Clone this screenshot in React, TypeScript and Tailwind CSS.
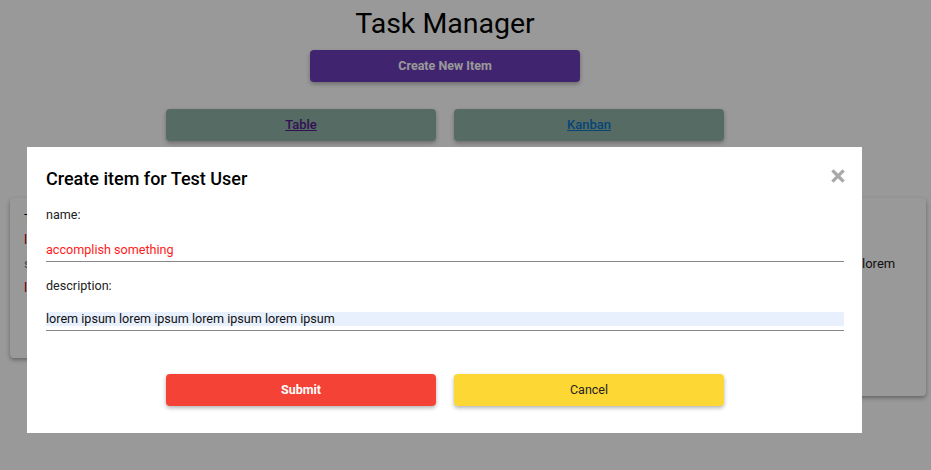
import React from 'react';

const font = { fontFamily: 'Roboto, "Noto Sans", sans-serif' };

function ItemCard({ title, lines, className }: { title: string; lines: { text: string; color: string }[]; className: string }) {
    return (
        <div className={`bg-white rounded-[4px] shadow-[0_2px_4px_rgba(0,0,0,0.35)] px-[14px] py-[12px] text-[13px] ${className}`}>
            <div className="text-black leading-[18px]">{title}</div>
            {lines.map((l, i) => (
                <div key={i} className="leading-[24px]" style={{ color: l.color }}>
                    {l.text}
                </div>
            ))}
        </div>
    );
}

export default function App() {
    return (
        <div className="relative w-[931px] h-[470px] overflow-hidden bg-white" style={font}>
            {/* Page behind the modal */}
            <div className="w-[890px] flex flex-col items-center">
                <h1 className="text-[28.5px] leading-[36px] mt-[6px] text-black">Task Manager</h1>
                <button className="mt-[8px] w-[270px] h-[32px] rounded-[4px] bg-[#6b3cb9] text-white text-[12.5px] font-bold shadow-[0_2px_4px_rgba(0,0,0,0.3)]">
                    Create New Item
                </button>
                <div className="mt-[27px] flex gap-[18px]">
                    <button className="w-[270px] h-[32px] rounded-[4px] bg-[#8fb2a7] text-[13px] font-medium shadow-[0_2px_4px_rgba(0,0,0,0.3)]">
                        <a href="#" className="underline text-[#551a8b]">Table</a>
                    </button>
                    <button className="w-[270px] h-[32px] rounded-[4px] bg-[#8fb2a7] text-[13px] font-medium shadow-[0_2px_4px_rgba(0,0,0,0.3)]">
                        <a href="#" className="underline text-[#0b73c5]">Kanban</a>
                    </button>
                </div>
            </div>
            <div className="mt-[57px] pl-[10px] pr-[5px] flex gap-[16px] items-start">
                <ItemCard
                    className="w-[290px] h-[160px]"
                    title="Test item"
                    lines={[
                        { text: 'lorem', color: '#c00000' },
                        { text: 'status', color: '#777' },
                        { text: 'lorem ipsum', color: '#c00000' },
                    ]}
                />
                <ItemCard
                    className="w-[290px] h-[160px]"
                    title="Test item"
                    lines={[{ text: 'lorem', color: '#c00000' }]}
                />
                <ItemCard
                    className="flex-1 h-[198px]"
                    title="Test item"
                    lines={[
                        { text: 'description', color: '#777' },
                        { text: 'lorem ipsum lorem ipsum lorem ipsum lorem ipsum lorem', color: '#222' },
                    ]}
                />
            </div>

            {/* Overlay */}
            <div className="absolute inset-0 bg-black/40" />

            {/* Modal */}
            <div className="absolute left-[27px] top-[147px] w-[835px] h-[286px] bg-white pt-[20px] px-[19px] pr-[18px]">
                <div className="flex items-center justify-between">
                    <h2 className="text-[18px] leading-[24px] font-medium text-black">Create item for Test User</h2>
                    <svg width="14" height="14" viewBox="0 0 14 14" className="mr-[-1px] mt-[-6px]">
                        <path d="M2.5 2.5 L11.5 11.5 M11.5 2.5 L2.5 11.5" stroke="#a9a9a9" strokeWidth="3.2" strokeLinecap="square" />
                    </svg>
                </div>
                <label className="block mt-[16px] text-[12.6px] leading-[16px] text-[#222]">name:</label>
                <input
                    readOnly
                    value="accomplish something"
                    className="block w-full mt-[14px] h-[25px] text-[12.6px] text-[#ff1a1a] border-b border-[#888] outline-none bg-transparent"
                    style={font}
                />
                <label className="block mt-[16px] text-[12.6px] leading-[16px] text-[#222]">description:</label>
                <div className="mt-[18px] border-b border-[#888] pb-[4px]">
                    <input
                        readOnly
                        value="lorem ipsum lorem ipsum lorem ipsum lorem ipsum"
                        className="block w-full h-[14px] text-[12.6px] leading-[14px] text-[#111] bg-[#e8f0fe] outline-none"
                        style={font}
                    />
                </div>
                <div className="mt-[43px] flex justify-center gap-[18px]">
                    <button className="w-[270px] h-[32px] rounded-[4px] bg-[#f44336] text-white text-[12.5px] font-bold shadow-[0_2px_4px_rgba(0,0,0,0.3)]">
                        Submit
                    </button>
                    <button className="w-[270px] h-[32px] rounded-[4px] bg-[#fdd835] text-[#222] text-[12.5px] shadow-[0_2px_4px_rgba(0,0,0,0.3)]">
                        Cancel
                    </button>
                </div>
            </div>
        </div>
    );
}
